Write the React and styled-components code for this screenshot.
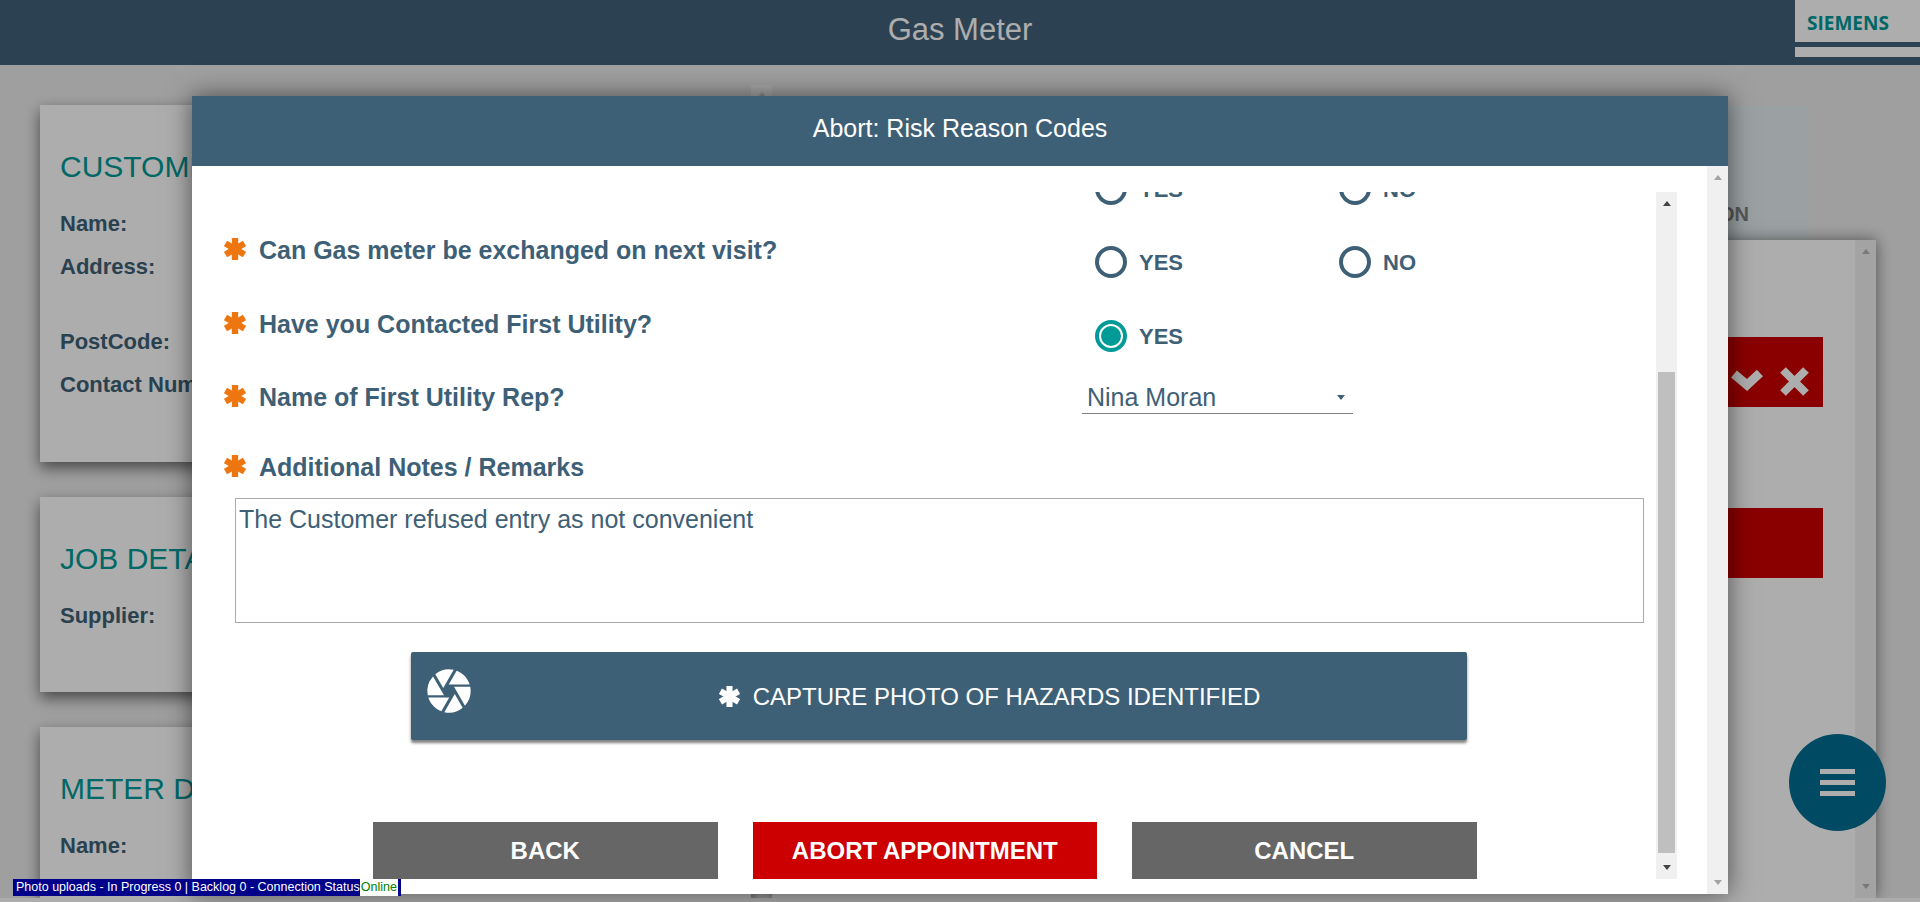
import React from 'react'
import styled, { createGlobalStyle } from 'styled-components'
import { MdCamera } from 'react-icons/md'

const BLUE = '#3e6076'
const TEAL = '#009a97'

const GlobalStyle = createGlobalStyle`
	html, body {
		margin: 0;
		height: 100%;
		overflow: hidden;
		font-family: "Liberation Sans", Arial, sans-serif;
	}
	* {
		box-sizing: border-box;
	}
`

const Page = styled.div`
	position: relative;
	height: 100vh;
	display: flex;
	flex-direction: column;
	overflow: hidden;
	background: #ebebeb;
`

const TopBar = styled.header`
	flex: none;
	height: 65px;
	display: grid;
	grid-template-columns: 1fr auto 1fr;
	background: #42617a;
`

const AppTitle = styled.h1`
	grid-column: 2;
	margin: 0;
	font-size: 31px;
	font-weight: 400;
	line-height: 60px;
	color: #fff;
`

const LogoTile = styled.div`
	justify-self: end;
	width: 125px;
	height: 57px;
	display: flex;
	flex-direction: column;
	background: #fff;
`

const LogoText = styled.span`
	height: 42px;
	padding-left: 12px;
	font-family: "Open Sans", sans-serif;
	font-size: 19px;
	font-weight: 700;
	line-height: 46px;
	color: #009999;
`

const LogoStripe = styled.span`
	height: 5px;
	background: #42617a;
`

const Main = styled.main`
	flex: 1;
	min-height: 0;
	display: flex;
`

const FooterStrip = styled.div`
	flex: none;
	height: 4px;
	background: #fff;
`

const LeftColumn = styled.section`
	flex: none;
	width: 772px;
	display: flex;
	padding: 20px 0 0 40px;
`

const CardStack = styled.div`
	flex: 1;
	display: flex;
	flex-direction: column;
	gap: 35px;
	padding-top: 20px;
`

const Card = styled.article`
	flex: ${props => props.$height ? `none` : 1};
	height: ${props => props.$height ? `${props.$height}px` : 'auto'};
	padding: 41px 20px 0;
	background: #fff;
	box-shadow: 0 6px 14px rgba(0, 0, 0, 0.55);
`

const CardHeading = styled.h2`
	margin: 0 0 14px;
	font-size: 30px;
	font-weight: 400;
	line-height: 42px;
	color: ${TEAL};
	white-space: nowrap;
`

const Field = styled.div`
	font-size: 22px;
	font-weight: 700;
	line-height: 43px;
	margin-top: ${props => props.$lead ? '3px' : 0};
	margin-bottom: ${props => props.$tall ? '32px' : 0};
	color: ${BLUE};
`

const RightColumn = styled.section`
	flex: 1;
	min-width: 0;
	display: flex;
	flex-direction: column;
	padding: 41px 44px 0 0;
`

const InfoCard = styled.div`
	flex: none;
	height: 134px;
	margin-right: 67px;
	display: flex;
	align-items: flex-end;
	justify-content: flex-end;
	padding: 0 60px 14px 0;
	background: #e5edf0;
	font-size: 20px;
	font-weight: 700;
	color: #808080;
`

const ActionPanel = styled.div`
	flex: 1;
	min-height: 0;
	display: flex;
	background: #fff;
	box-shadow: 0 0 14px rgba(0, 0, 0, 0.5);
`

const ActionList = styled.div`
	flex: 1;
	display: flex;
	flex-direction: column;
	align-items: flex-end;
	gap: 101px;
	padding: 97px 32px 0 0;
`

const ActionBar = styled.div`
	width: 700px;
	height: 70px;
	display: flex;
	justify-content: flex-end;
	gap: 17px;
	padding: 30px 14px 0 0;
	background: #cc0000;
`

const ScrollTrack = styled.div`
	flex: none;
	width: 21px;
	display: flex;
	flex-direction: column;
	align-items: center;
	justify-content: ${props => props.$spread ? 'space-between' : 'flex-start'};
	padding: 9px 0;
	background: #f0f0f0;
`

const ScrollStub = styled.div`
	flex: none;
	width: 21px;
	height: 11px;
	display: flex;
	justify-content: center;
	padding-top: 7px;
	background: #fff;
	opacity: 0.5;
`

const ScrollThumb = styled.div`
	width: 17px;
	height: 481px;
	margin: 166px 0 12px;
	background: #bfbfbf;
`

const Arrow = styled.span`
	flex: none;
	width: 0;
	height: 0;
	border-left: 4.5px solid transparent;
	border-right: 4.5px solid transparent;
	border-bottom: ${props => props.$down ? 0 : `5px solid ${props.$color}`};
	border-top: ${props => props.$down ? `5px solid ${props.$color}` : 0};
`

const Fab = styled.button`
	position: absolute;
	left: 1789px;
	top: 734px;
	width: 97px;
	height: 97px;
	display: flex;
	flex-direction: column;
	align-items: center;
	justify-content: center;
	gap: 6px;
	padding: 0;
	border: 0;
	border-radius: 50%;
	background: #006d92;
`

const FabBar = styled.span`
	width: 35px;
	height: 5px;
	background: #fff;
`

const Backdrop = styled.div`
	position: absolute;
	inset: 0;
	background: rgba(0, 0, 0, 0.32);
`

const Modal = styled.div`
	position: absolute;
	left: 192px;
	top: 96px;
	width: 1536px;
	height: 798px;
	display: flex;
	flex-direction: column;
	background: #fff;
	box-shadow: 0 0 24px rgba(0, 0, 0, 0.55);
`

const ModalHeader = styled.h3`
	flex: none;
	height: 70px;
	margin: 0;
	font-size: 25px;
	font-weight: 400;
	line-height: 65px;
	text-align: center;
	color: #fff;
	background: ${BLUE};
`

const ModalBody = styled.div`
	flex: 1;
	min-height: 0;
	display: flex;
	justify-content: space-between;
`

const InnerScroll = styled.div`
	flex: none;
	width: 1485px;
	display: flex;
	margin: 26px 0 15px;
`

const ScrollContent = styled.div`
	flex: 1;
	min-width: 0;
	overflow: hidden;
`

const FormRow = styled.div`
	height: ${props => props.$height}px;
	margin-top: ${props => props.$offset || 0}px;
	display: flex;
	padding-left: 32px;
`

const QuestionLabel = styled.label`
	flex: none;
	width: 871px;
	display: flex;
	align-items: center;
	gap: 13px;
	height: 50px;
	font-size: 25px;
	font-weight: 700;
	color: ${BLUE};
`

const StarSvg = styled.svg`
	flex: none;
	width: ${props => props.$size}px;
	height: ${props => props.$size}px;
	margin-top: -2px;
	color: ${props => props.$color};
`

const Star = ({ size = 22, color = '#ee7610' }) => (
	<StarSvg $size={size} $color={color} viewBox="0 0 22 22">
		<g stroke="currentColor" strokeWidth="6.4" fill="none">
			<path d="M11 0 V22" />
			<path d="M1.5 5.5 L20.5 16.5" />
			<path d="M20.5 5.5 L1.5 16.5" />
		</g>
	</StarSvg>
)

const RadioGroup = styled.div`
	display: flex;
	padding-top: 21px;
`

const RadioOption = styled.div`
	width: 244px;
	height: 32px;
	display: flex;
	align-items: center;
	gap: 12px;
	font-size: 22px;
	font-weight: 700;
	line-height: 34px;
	color: ${BLUE};
`

const RadioText = styled.span`
	padding-top: 2px;
`

const RadioDot = styled.span`
	flex: none;
	width: 32px;
	height: 32px;
	padding: 2px;
	border: 4px solid ${props => props.$checked ? TEAL : BLUE};
	border-radius: 50%;
	background: ${props => props.$checked ? TEAL : 'transparent'};
	background-clip: content-box;
`

const SelectBox = styled.div`
	width: 271px;
	height: 42px;
	margin: 0 0 0 -13px;
	display: flex;
	align-items: center;
	justify-content: space-between;
	padding: 9px 8px 0 5px;
	border-bottom: 1px solid #808080;
	font-size: 25px;
	color: ${BLUE};
`

const NotesBox = styled.textarea`
	display: block;
	width: 1409px;
	height: 125px;
	margin: 6px 0 0 43px;
	padding: 6px 3px;
	border: 1px solid #aaa;
	border-radius: 0;
	outline: 0;
	resize: none;
	font-family: inherit;
	font-size: 25px;
	line-height: 29px;
	color: ${BLUE};
`

const CaptureButton = styled.button`
	position: relative;
	display: flex;
	align-items: center;
	justify-content: center;
	gap: 13px;
	width: 1056px;
	height: 88px;
	margin: 29px 0 0 219px;
	padding: 2px 0 0 101px;
	border: 0;
	border-radius: 2px;
	background: ${BLUE};
	box-shadow: 0 3px 3px rgba(0, 0, 0, 0.5);
	font-family: inherit;
	font-size: 24px;
	color: #fff;
`

const CaptureIcon = styled(MdCamera)`
	position: absolute;
	left: 12px;
	top: 13px;
	width: 52px;
	height: 52px;
`

const ButtonRow = styled.div`
	display: flex;
	gap: 35px;
	margin: 82px 0 0 181px;
`

const ActionButton = styled.button`
	width: 344.5px;
	height: 58px;
	padding: 0;
	border: 0;
	background: ${props => props.$danger ? '#cc0000' : '#666'};
	font-family: inherit;
	font-size: 24px;
	font-weight: 700;
	color: #fff;
`

const StatusBar = styled.div`
	position: absolute;
	left: 13px;
	top: 879px;
	width: 388px;
	height: 17px;
	padding: 0 3px;
	display: flex;
	justify-content: space-between;
	background: #00008b;
	font-size: 12.5px;
	line-height: 17px;
	color: #fff;
	white-space: nowrap;
`

const StatusOnline = styled.span`
	padding: 0 1px;
	background: #fff;
	color: #008000;
`

const CheckGlyph = () => (
	<svg width="32" height="24" viewBox="0 0 32 24">
		<polyline points="3,7 16,18 29,6" fill="none" stroke="#fff" strokeWidth="9" />
	</svg>
)

const CrossGlyph = () => (
	<svg width="29" height="29" viewBox="0 0 29 29">
		<path d="M3 3 L26 26 M26 3 L3 26" fill="none" stroke="#fff" strokeWidth="8" />
	</svg>
)

const Question = ({ children }) => (
	<QuestionLabel>
		<Star />
		{children}
	</QuestionLabel>
)

const YesNo = () => (
	<RadioGroup>
		<RadioOption><RadioDot /><RadioText>YES</RadioText></RadioOption>
		<RadioOption><RadioDot /><RadioText>NO</RadioText></RadioOption>
	</RadioGroup>
)

export default function App() {
	return (
		<Page>
			<GlobalStyle />
			<TopBar>
				<AppTitle>Gas Meter</AppTitle>
				<LogoTile>
					<LogoText>SIEMENS</LogoText>
					<LogoStripe />
				</LogoTile>
			</TopBar>

			<Main>
				<LeftColumn>
					<CardStack>
						<Card $height={357}>
							<CardHeading>CUSTOMER DETAILS</CardHeading>
							<Field>Name:</Field>
							<Field $tall>Address:</Field>
							<Field>PostCode:</Field>
							<Field>Contact Number:</Field>
						</Card>
						<Card $height={195}>
							<CardHeading>JOB DETAILS</CardHeading>
							<Field>Supplier:</Field>
						</Card>
						<Card>
							<CardHeading>METER DETAILS</CardHeading>
							<Field $lead>Name:</Field>
						</Card>
					</CardStack>
					<ScrollStub><Arrow $color="#b3b3b3" /></ScrollStub>
				</LeftColumn>

				<RightColumn>
					<InfoCard>LOCATION</InfoCard>
					<ActionPanel>
						<ActionList>
							<ActionBar>
								<CheckGlyph />
								<CrossGlyph />
							</ActionBar>
							<ActionBar />
						</ActionList>
						<ScrollTrack $spread>
							<Arrow $color="#b3b3b3" />
							<Arrow $down $color="#b3b3b3" />
						</ScrollTrack>
					</ActionPanel>
				</RightColumn>
			</Main>
			<FooterStrip />

			<Fab>
				<FabBar />
				<FabBar />
				<FabBar />
			</Fab>

			<Backdrop />

			<Modal>
				<ModalHeader>Abort: Risk Reason Codes</ModalHeader>
				<ModalBody>
					<InnerScroll>
						<ScrollContent>
							<FormRow $height={73} $offset={-40}>
								<QuestionLabel />
								<YesNo />
							</FormRow>
							<FormRow $height={74}>
								<Question>Can Gas meter be exchanged on next visit?</Question>
								<YesNo />
							</FormRow>
							<FormRow $height={73}>
								<Question>Have you Contacted First Utility?</Question>
								<RadioGroup>
									<RadioOption><RadioDot $checked /><RadioText>YES</RadioText></RadioOption>
								</RadioGroup>
							</FormRow>
							<FormRow $height={70}>
								<Question>Name of First Utility Rep?</Question>
								<SelectBox>
									Nina Moran
									<Arrow $down $color={BLUE} />
								</SelectBox>
							</FormRow>
							<FormRow $height={50}>
								<Question>Additional Notes / Remarks</Question>
							</FormRow>
							<NotesBox readOnly defaultValue="The Customer refused entry as not convenient" />
							<CaptureButton>
								<CaptureIcon />
								<Star size={21} color="#fff" />
								CAPTURE PHOTO OF HAZARDS IDENTIFIED
							</CaptureButton>
							<ButtonRow>
								<ActionButton>BACK</ActionButton>
								<ActionButton $danger>ABORT APPOINTMENT</ActionButton>
								<ActionButton>CANCEL</ActionButton>
							</ButtonRow>
						</ScrollContent>
						<ScrollTrack>
							<Arrow $color="#444" />
							<ScrollThumb />
							<Arrow $down $color="#444" />
						</ScrollTrack>
					</InnerScroll>
					<ScrollTrack $spread>
						<Arrow $color="#a3a3a3" />
						<Arrow $down $color="#a3a3a3" />
					</ScrollTrack>
				</ModalBody>
			</Modal>

			<StatusBar>
				Photo uploads - In Progress 0 | Backlog 0 - Connection Status
				<StatusOnline>Online</StatusOnline>
			</StatusBar>
		</Page>
	)
}
